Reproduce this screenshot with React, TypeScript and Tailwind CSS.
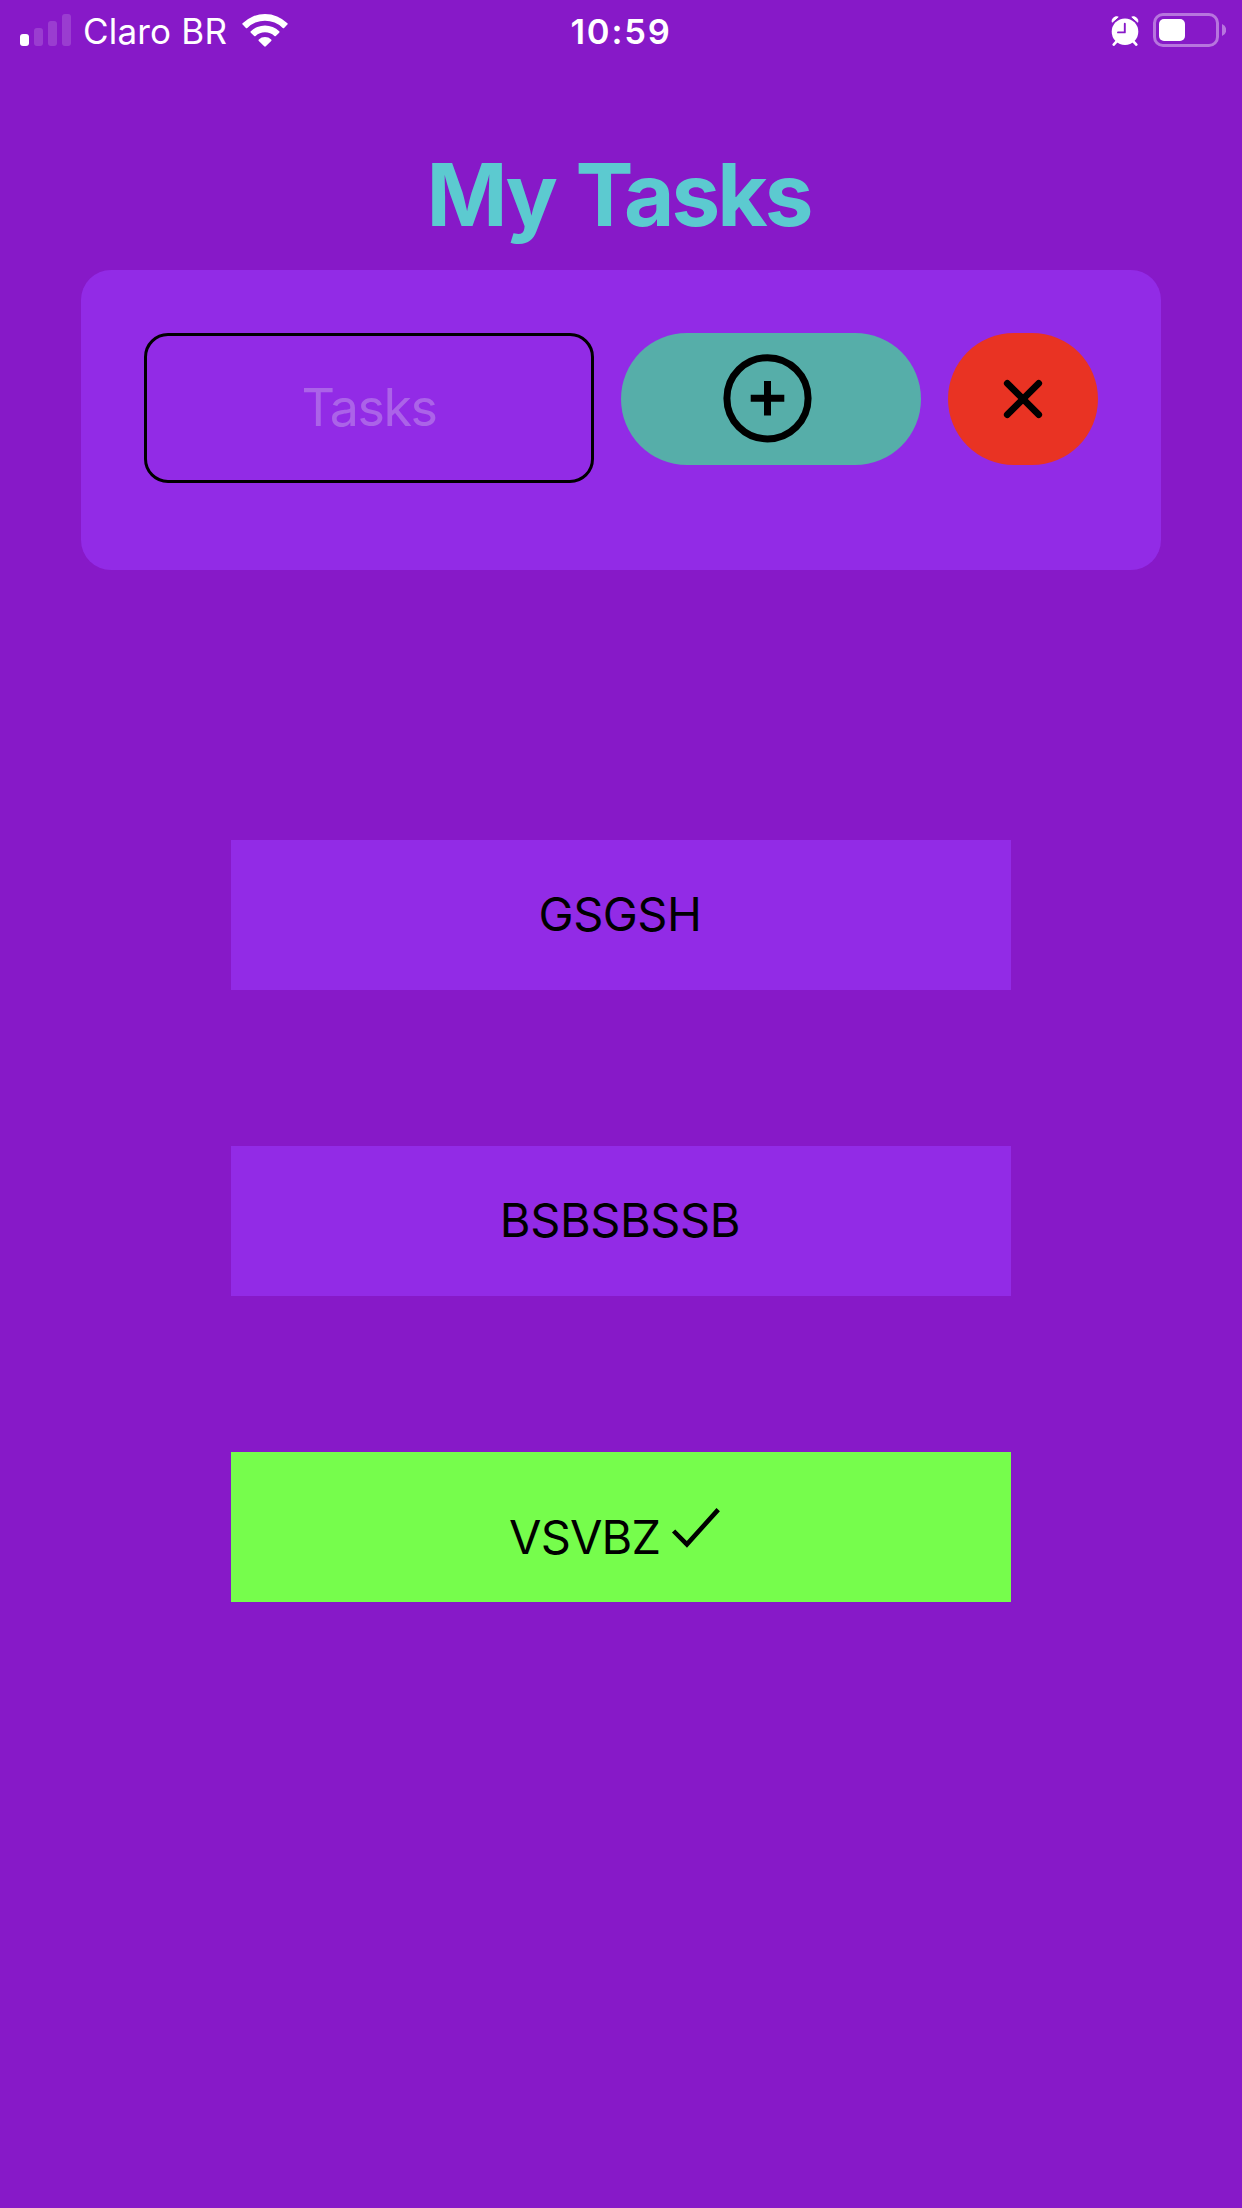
import React from "react";

function Signal() {
  return (
    <div className="ml-5 flex h-8 items-end gap-[5px]">
      <div className="h-3 w-[9px] rounded-[3px] bg-white" />
      <div className="h-[18px] w-[9px] rounded-[3px] bg-white/16" />
      <div className="h-[25px] w-[9px] rounded-[3px] bg-white/16" />
      <div className="h-8 w-[9px] rounded-[3px] bg-white/16" />
    </div>
  );
}

function Wifi() {
  return (
    <svg className="ml-[13px] h-[33px] w-[46px]" viewBox="0 0 46 33" fill="#fff">
      <path d="M.6 9.2a32 32 0 0 1 44.8 0q.7.7 0 1.4l-3.3 3.3q-.7.7-1.4 0a25.3 25.3 0 0 0-35.4 0q-.7.7-1.4 0L.6 10.6q-.7-.7 0-1.4z" />
      <path d="M8.8 17.3a20.3 20.3 0 0 1 28.4 0q.7.7 0 1.4L33.8 22q-.7.7-1.4 0a13.6 13.6 0 0 0-18.8 0q-.7.7-1.4 0l-3.4-3.3q-.7-.7 0-1.4z" />
      <path d="M16.8 25.4a9.3 9.3 0 0 1 12.4 0q.8.7 0 1.5l-5.4 5.4q-.8.7-1.6 0l-5.4-5.4q-.8-.8 0-1.5z" />
    </svg>
  );
}

function Alarm() {
  return (
    <svg className="h-[30px] w-[28px]" viewBox="0 0 28 30" fill="none">
      <path d="M6 25l-3.3 3.6M22 25l3.3 3.6" stroke="#fff" strokeWidth="2.6" strokeLinecap="round" />
      <path d="M1.2 6.2A4.5 4.5 0 0 1 7.2 1zM26.8 6.2A4.5 4.5 0 0 0 20.8 1z" fill="#fff" stroke="#fff" strokeWidth="1" strokeLinejoin="round" />
      <circle cx="14" cy="15.7" r="13.3" fill="#fff" />
      <path d="M13.8 7.8v8.6H7" stroke="#8719c8" strokeWidth="1.9" strokeLinecap="round" strokeLinejoin="round" />
    </svg>
  );
}

function Battery() {
  return (
    <div className="ml-[14px] flex items-center gap-[3px]">
      <div className="flex h-[34px] w-[66px] items-center rounded-[10px] border-3 border-white/40 pl-[3px]">
        <div className="h-[22px] w-[26px] rounded-[5px] bg-white" />
      </div>
      <svg className="h-3 w-1" viewBox="0 0 4 12">
        <path d="M0 0a6.4 6.4 0 0 1 0 12z" fill="#fff" fillOpacity=".4" />
      </svg>
    </div>
  );
}

function StatusBar() {
  return (
    <header className="grid h-[60px] grid-cols-3 text-white">
      <div className="flex pt-[14px]">
        <Signal />
        <span className="ml-3 w-[146px] text-[35px] leading-[35px] tracking-[0.2px] whitespace-nowrap">Claro BR</span>
        <Wifi />
      </div>
      <div className="pt-[14px] text-center text-[34.5px] leading-[35px] font-semibold tracking-[1.8px]">10:59</div>
      <div className="flex items-start justify-end pt-[13px] pr-4">
        <div className="pt-[3px]">
          <Alarm />
        </div>
        <Battery />
      </div>
    </header>
  );
}

function AddButton() {
  return (
    <button className="flex h-[132px] w-[300px] justify-center rounded-[66px] bg-[#56aea9] pt-[21px] pr-[7px]">
      <svg className="h-[89px] w-[89px]" viewBox="0 0 89 89" fill="none" stroke="#000" strokeWidth="7">
        <circle cx="44.5" cy="44.3" r="40.6" />
        <path d="M44.5 27v34.6M27.7 44.3h33.6" />
      </svg>
    </button>
  );
}

function ClearButton() {
  return (
    <button className="flex h-[132px] w-[150px] items-center justify-center rounded-[66px] bg-[#e93323]">
      <svg className="h-10 w-10" viewBox="0 0 40 40" fill="none" stroke="#000" strokeWidth="6.8" strokeLinecap="round">
        <path d="M4.3 4.3l31.4 31.4M35.7 4.3L4.3 35.7" />
      </svg>
    </button>
  );
}

export default function App() {
  return (
    <div className="flex h-[2208px] w-[1242px] flex-col bg-[#8719c8] font-['Inter',sans-serif] text-black">
      <StatusBar />
      <h1 className="mt-[82px] h-[128px] pr-[5px] text-center text-[87px] leading-[105px] font-bold tracking-[-3px] [word-spacing:3px] text-[#5ccad0]">My Tasks</h1>
      <section className="mx-[81px] flex h-[300px] items-start gap-[27px] rounded-[30px] bg-[#922be6] p-[63px]">
        <input
          className="h-[150px] w-[450px] rounded-[24px] border-3 border-black bg-transparent pb-[1px] text-center text-[52px] tracking-[-1.5px] outline-none placeholder:text-[#ab63e8]"
          placeholder="Tasks"
        />
        <AddButton />
        <ClearButton />
      </section>
      <ul className="mx-[231px] mt-[270px] flex flex-col gap-[156px] text-[47px]">
        <li className="flex h-[150px] items-center justify-center bg-[#922be6] pr-[2px] pb-[2px] tracking-[-0.5px]">GSGSH</li>
        <li className="flex h-[150px] items-center justify-center bg-[#922be6] pr-[2px] pb-[2px] tracking-[-0.4px]">BSBSBSSB</li>
        <li className="flex h-[150px] bg-[#76fd4c] pt-[50px] pl-[278px]">
          <span className="w-[162px] leading-[70px] tracking-[-0.8px]">VSVBZ</span>
          <svg className="mt-[5px] h-[42px] w-[50px]" viewBox="0 0 50 42" fill="none" stroke="#000" strokeWidth="4.6">
            <path d="M2.6 24l13.3 13.4L47.2 2.6" />
          </svg>
        </li>
      </ul>
    </div>
  );
}
